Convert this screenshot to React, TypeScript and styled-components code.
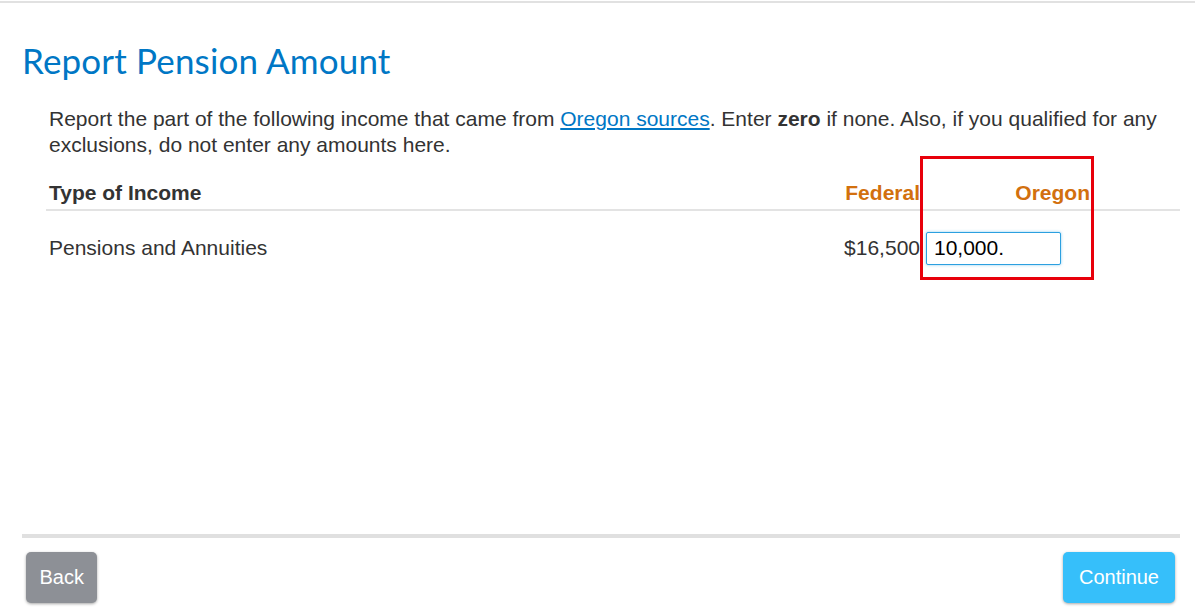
import React from "react";
import styled, { createGlobalStyle } from "styled-components";

const GlobalStyle = createGlobalStyle`
  html, body {
    margin: 0;
    padding: 0;
    background: #fff;
  }
  body {
    font-family: "Liberation Sans", Arial, sans-serif;
    color: #333;
  }
`;

const Page = styled.div`
  box-sizing: border-box;
  display: flex;
  flex-direction: column;
  margin-top: 1px;
  border-top: 2px solid #e1e1e1;
  height: 615px;
`;

const Main = styled.main`
  flex: 1;
  padding: 0 15px 0 22px;
`;

const Title = styled.h1`
  margin: 35px 0 0 0;
  font-family: Lato, "Noto Sans", sans-serif;
  font-weight: 400;
  font-size: 35px;
  line-height: 44px;
  color: #0077c5;
  letter-spacing: 0.15px;
`;

const Body = styled.div`
  padding-left: 24px;
  margin-top: 24px;
`;

const Intro = styled.p`
  margin: 0 0 0 3px;
  font-size: 21px;
  line-height: 26px;
  color: #333;
`;

const Link = styled.a`
  color: #0077c5;
  text-decoration: underline;
`;

const Table = styled.div`
  position: relative;
  margin-top: 17px;
`;

const Row = styled.div<{ $head?: boolean }>`
  display: grid;
  grid-template-columns: 1fr auto 170px 90px;
  align-items: center;
  box-sizing: border-box;
  height: ${(p) => (p.$head ? "36px" : "74px")};
  padding-top: ${(p) => (p.$head ? "2px" : "0")};
  border-bottom: ${(p) => (p.$head ? "2px solid #e3e3e3" : "none")};
  font-size: 21px;
  font-weight: ${(p) => (p.$head ? 700 : 400)};
`;

const Cell = styled.div<{ $right?: boolean; $accent?: boolean }>`
  padding-left: ${(p) => (p.$right ? "0" : "3px")};
  text-align: ${(p) => (p.$right ? "right" : "left")};
  color: ${(p) => (p.$accent ? "#d2700e" : "#333")};
`;

const InputCell = styled.div`
  padding-left: 6px;
`;

const AmountInput = styled.input`
  box-sizing: border-box;
  width: 135px;
  height: 33px;
  padding: 0 7px;
  border: 1px solid #2ca0e0;
  border-radius: 2px;
  box-shadow: 0 0 3px rgba(44, 160, 224, 0.55);
  font-family: "Liberation Sans", Arial, sans-serif;
  font-size: 21px;
  color: #000;
  outline: none;
`;

const Highlight = styled.div`
  position: absolute;
  left: 874px;
  top: -19px;
  width: 168px;
  height: 118px;
  border: 3px solid #e8000b;
  pointer-events: none;
`;

const Footer = styled.footer`
  margin: 0 15px 0 22px;
  border-top: 4px solid #e0e0e0;
  padding: 14px 5px 13px 4px;
  display: flex;
  justify-content: space-between;
`;

const Button = styled.button<{ $primary?: boolean }>`
  height: 51px;
  padding: 0 ${(p) => (p.$primary ? "16px" : "13.5px")};
  border: none;
  border-radius: 5px;
  background: ${(p) => (p.$primary ? "#36bffa" : "#8d9096")};
  color: #fff;
  font-family: "Liberation Sans", Arial, sans-serif;
  font-size: 20px;
  box-shadow: 0 1px 3px rgba(0, 0, 0, 0.35);
  cursor: pointer;
`;

export default function App() {
  return (
    <>
      <GlobalStyle />
      <Page>
        <Main>
          <Title>Report Pension Amount</Title>
          <Body>
            <Intro>
              Report the part of the following income that came from{" "}
              <Link href="#">Oregon sources</Link>. Enter <b>zero</b> if none.
              Also, if you qualified for any exclusions, do not enter any
              amounts here.
            </Intro>
            <Table>
              <Row $head>
                <Cell>Type of Income</Cell>
                <Cell $right $accent>Federal</Cell>
                <Cell $right $accent>Oregon</Cell>
                <Cell />
              </Row>
              <Row>
                <Cell>Pensions and Annuities</Cell>
                <Cell $right>$16,500</Cell>
                <InputCell>
                  <AmountInput defaultValue="10,000." />
                </InputCell>
                <Cell />
              </Row>
              <Highlight />
            </Table>
          </Body>
        </Main>
        <Footer>
          <Button>Back</Button>
          <Button $primary>Continue</Button>
        </Footer>
      </Page>
    </>
  );
}
